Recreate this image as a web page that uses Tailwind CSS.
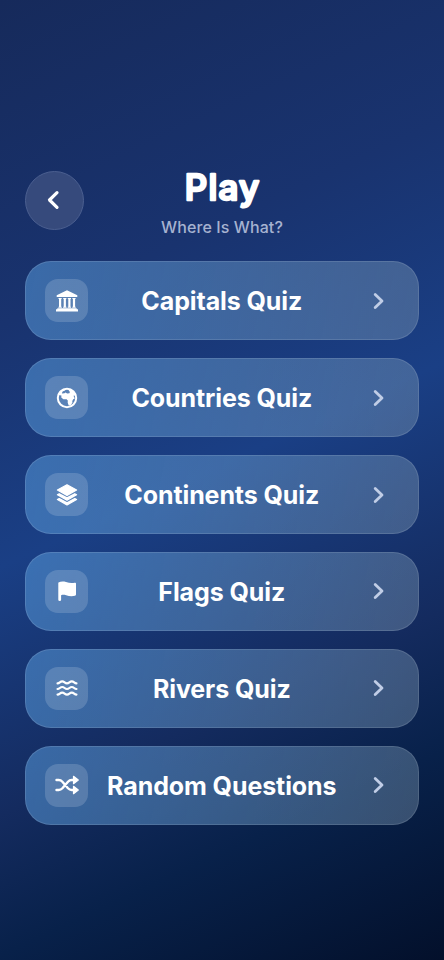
<!DOCTYPE html>
<html lang="en">
<head>
<meta charset="utf-8">
<title>Play</title>
<script src="https://cdn.jsdelivr.net/npm/@tailwindcss/browser@4"></script>
</head>
<body class="w-[444px] h-[960px] overflow-hidden text-white font-['Inter','Liberation_Sans',sans-serif] bg-[linear-gradient(155.2deg,#162a5b_0%,#19336f_28%,#1a3f85_48.7%,#142b5f_70%,#08214a_82%,#03102b_100%)]">
<main class="px-[25px] pt-[168px]">
  <header class="relative h-[93.300px] flex flex-col items-center">
    <button class="absolute left-[-0.5px] top-[2.5px] size-[59.5px] rounded-full bg-[#364a7c] border border-[#4b5f90] flex items-center justify-center" aria-label="Back">
      <svg class="w-[14px] h-[20px] mr-[3px]" viewBox="0 0 14 20" fill="none" stroke="currentColor" stroke-width="3.200" stroke-linecap="round" stroke-linejoin="round"><path d="M11 2.700 3.500 10l7.500 7.300"/></svg>
    </button>
    <h1 class="h-[46px]"><svg class="w-[120px] h-[50px] overflow-visible" viewBox="0 0 120 50"><text x="60" y="31.500" text-anchor="middle" textLength="74.500" lengthAdjust="spacing" class="text-[35px] font-medium fill-white stroke-white [stroke-width:2.5px] [stroke-linejoin:round]">Play</text></svg></h1>
    <p class="text-[16px] font-medium leading-[26px] text-[#a6b2d0] tracking-[0.1px]">Where Is What?</p>
  </header>
  <nav class="flex flex-col gap-[17.900px]">
    <button class="h-[79px] shrink-0 rounded-[26px] border border-white/12 bg-[linear-gradient(101.2deg,rgb(84_150_215/.57),rgb(136_162_185/.38))] bg-origin-border pl-[19px] pr-[19.500px] flex items-center">
      <span class="size-[43px] rounded-[13px] bg-white/16 flex items-center justify-center"><svg class="size-[24px]" viewBox="0 0 24 24" fill="currentColor"><path d="M12 1.200 22.300 6.200v1.900H1.700V6.200zM3.500 9h3.200v1H6.200v7.800h.6v1H3.400v-1H4V10h-.5zm4.700 0h3.200v1h-.5v7.800h.6v1H8.100v-1h.6V10h-.5zm4.600 0H16v1h-.5v7.800h.6v1h-3.400v-1h.6V10h-.5zm4.600 0h3.200v1h-.5v7.800h.6v1h-3.400v-1h.6V10h-.5zM2.300 19.300h19.400v1H23v2.300H1v-2.300h1.300z"/></svg></span>
      <span class="flex-1 pt-[2px] pr-[17px] text-center text-[25px] font-bold tracking-[-0.1px] whitespace-nowrap">Capitals Quiz</span>
      <svg class="w-[12px] h-[18px] mr-[14px] text-[#c0cde6]" viewBox="0 0 12 18" fill="none" stroke="currentColor" stroke-width="2.800" stroke-linecap="round" stroke-linejoin="round"><path d="M2.200 2.500 9 9l-6.800 6.500"/></svg>
    </button>
    <button class="h-[79px] shrink-0 rounded-[26px] border border-white/12 bg-[linear-gradient(101.2deg,rgb(84_150_215/.57),rgb(136_162_185/.38))] bg-origin-border pl-[19px] pr-[19.500px] flex items-center">
      <span class="size-[43px] rounded-[13px] bg-white/16 flex items-center justify-center"><svg class="size-[24px]" viewBox="0 0 24 24" fill="none"><circle cx="12" cy="12" r="9.200" stroke="currentColor" stroke-width="2"/><path fill="currentColor" d="M3 10C3 5.500 7 2.800 11 3l-1 1.600-2.500 1-.6 1.900 2.600-.2.900-.9 1.800 1 2.200-.2.600-1.500-1.300-.7.400-1.400c3.500.3 6.500 3.500 6.900 7.400l-1.300-1.600-1.200.4 1.300 2.700-1.600.8-.9 1.800.1 1.700-1.900 2.600h-1.800l-1-2.700.1-2.100-1.200-1.300H8.400l-2.100-1.700.1-2.100L3.500 9z"/></svg></span>
      <span class="flex-1 pt-[2px] pr-[17px] text-center text-[25px] font-bold tracking-[-0.1px] whitespace-nowrap">Countries Quiz</span>
      <svg class="w-[12px] h-[18px] mr-[14px] text-[#c0cde6]" viewBox="0 0 12 18" fill="none" stroke="currentColor" stroke-width="2.800" stroke-linecap="round" stroke-linejoin="round"><path d="M2.200 2.500 9 9l-6.800 6.500"/></svg>
    </button>
    <button class="h-[79px] shrink-0 rounded-[26px] border border-white/12 bg-[linear-gradient(101.2deg,rgb(84_150_215/.57),rgb(136_162_185/.38))] bg-origin-border pl-[19px] pr-[19.500px] flex items-center">
      <span class="size-[43px] rounded-[13px] bg-white/16 flex items-center justify-center"><svg class="size-[24px]" viewBox="0 0 24 24" fill="currentColor" stroke="currentColor" stroke-width="1.200" stroke-linejoin="round"><path d="m12 1.800 9.600 5.200-9.600 5.500L2.400 7zM2.400 11.700l1.800-1 7.800 4.200 7.800-4.200 1.800 1-9.600 5.500zM2.400 16.500l1.800-1 7.800 4.200 7.800-4.200 1.800 1-9.600 5.500z"/></svg></span>
      <span class="flex-1 pt-[2px] pr-[17px] text-center text-[25px] font-bold tracking-[-0.1px] whitespace-nowrap">Continents Quiz</span>
      <svg class="w-[12px] h-[18px] mr-[14px] text-[#c0cde6]" viewBox="0 0 12 18" fill="none" stroke="currentColor" stroke-width="2.800" stroke-linecap="round" stroke-linejoin="round"><path d="M2.200 2.500 9 9l-6.800 6.500"/></svg>
    </button>
    <button class="h-[79px] shrink-0 rounded-[26px] border border-white/12 bg-[linear-gradient(101.2deg,rgb(84_150_215/.57),rgb(136_162_185/.38))] bg-origin-border pl-[19px] pr-[19.500px] flex items-center">
      <span class="size-[43px] rounded-[13px] bg-white/16 flex items-center justify-center"><svg class="size-[24px]" viewBox="0 0 24 24" fill="currentColor"><path d="M3.500 3.600C5.500 2.400 8 2.200 11 3c3.200 1 5.400 1.300 8.800.7.700-.1 1.200.3 1.200 1v10.700c0 .7-.3 1.100-1 1.300-3.300.8-5.800.4-8.900-.5-2.200-.6-3.400-.6-5 0v4.500a1.400 1.400 0 0 1-2.800 0V4.300c0-.3 0-.5.200-.7z"/></svg></span>
      <span class="flex-1 pt-[2px] pr-[17px] text-center text-[25px] font-bold tracking-[-0.1px] whitespace-nowrap">Flags Quiz</span>
      <svg class="w-[12px] h-[18px] mr-[14px] text-[#c0cde6]" viewBox="0 0 12 18" fill="none" stroke="currentColor" stroke-width="2.800" stroke-linecap="round" stroke-linejoin="round"><path d="M2.200 2.500 9 9l-6.800 6.500"/></svg>
    </button>
    <button class="h-[79px] shrink-0 rounded-[26px] border border-white/12 bg-[linear-gradient(101.2deg,rgb(84_150_215/.57),rgb(136_162_185/.38))] bg-origin-border pl-[19px] pr-[19.500px] flex items-center">
      <span class="size-[43px] rounded-[13px] bg-white/16 flex items-center justify-center"><svg class="size-[24px]" viewBox="0 0 24 24" fill="none" stroke="currentColor" stroke-width="2.100" stroke-linecap="round" stroke-linejoin="round"><path d="M2.500 7.400c2.300 0 2.400-2 4.700-2s2.500 2 4.800 2 2.500-2 4.800-2 2.400 2 4.700 2M2.500 13c2.300 0 2.400-2 4.700-2s2.500 2 4.800 2 2.500-2 4.800-2 2.400 2 4.700 2M2.500 18.600c2.300 0 2.400-2 4.700-2s2.500 2 4.800 2 2.500-2 4.800-2 2.400 2 4.700 2"/></svg></span>
      <span class="flex-1 pt-[2px] pr-[17px] text-center text-[25px] font-bold tracking-[-0.1px] whitespace-nowrap">Rivers Quiz</span>
      <svg class="w-[12px] h-[18px] mr-[14px] text-[#c0cde6]" viewBox="0 0 12 18" fill="none" stroke="currentColor" stroke-width="2.800" stroke-linecap="round" stroke-linejoin="round"><path d="M2.200 2.500 9 9l-6.800 6.500"/></svg>
    </button>
    <button class="h-[79px] shrink-0 rounded-[26px] border border-white/12 bg-[linear-gradient(101.2deg,rgb(84_150_215/.57),rgb(136_162_185/.38))] bg-origin-border pl-[19px] pr-[19.500px] flex items-center">
      <span class="size-[43px] rounded-[13px] bg-white/16 flex items-center justify-center"><svg class="size-[26px]" viewBox="0 0 26 26" fill="none" stroke="currentColor" stroke-width="2.400" stroke-linecap="round" stroke-linejoin="round"><path d="M2.500 8h2.200c1.600 0 2.700.6 3.700 1.700l5.600 6.600c1 1.100 2.100 1.700 3.700 1.700H20M2.500 18h2.200c1.600 0 2.700-.6 3.700-1.700L14 9.700C15 8.600 16.100 8 17.700 8H20"/><path fill="currentColor" stroke-width="1.200" d="M19.500 4.300v7.400L24.300 8zM19.500 14.300v7.400l4.800-3.700z"/></svg></span>
      <span class="flex-1 pt-[2px] pr-[17px] text-center text-[25px] font-bold tracking-[-0.1px] whitespace-nowrap">Random Questions</span>
      <svg class="w-[12px] h-[18px] mr-[14px] text-[#c0cde6]" viewBox="0 0 12 18" fill="none" stroke="currentColor" stroke-width="2.800" stroke-linecap="round" stroke-linejoin="round"><path d="M2.200 2.500 9 9l-6.800 6.500"/></svg>
    </button>
  </nav>
</main>
</body>
</html>
